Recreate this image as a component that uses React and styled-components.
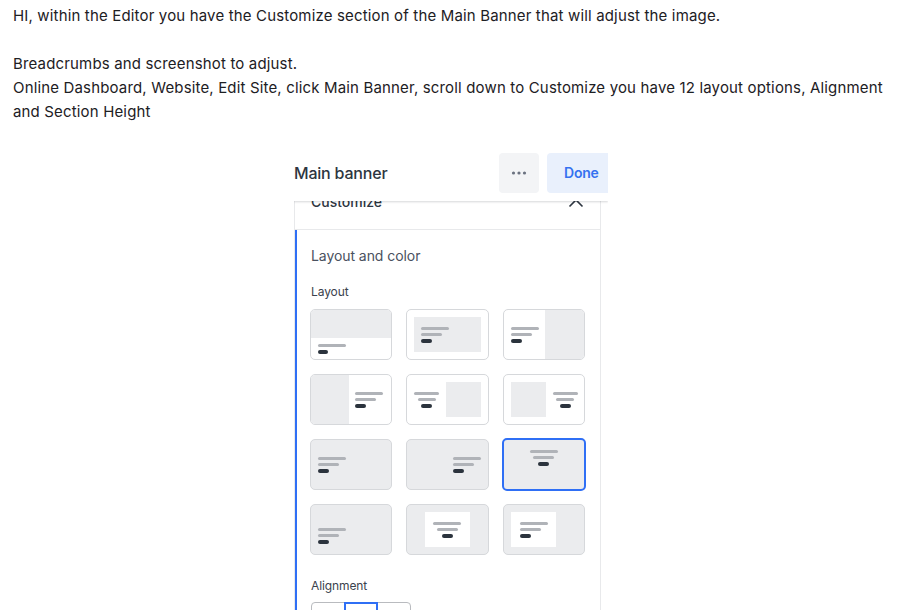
import React from 'react'
import styled, { createGlobalStyle } from 'styled-components'

const GlobalStyle = createGlobalStyle`
  html, body {
    margin: 0;
    height: 100%;
    overflow: hidden;
    background: #fff;
  }
`

const Page = styled.div`
  box-sizing: border-box;
  height: 610px;
  overflow: hidden;
  padding: 4px 23px 0 13px;
  font-family: Inter, "Liberation Sans", sans-serif;
  color: #1d2024;
`

const Message = styled.p`
  margin: 0;
  font-size: 15px;
  letter-spacing: 0.16px;
  line-height: 24px;
  white-space: pre-line;
`

const Shot = styled.div`
  width: 314px;
  height: 457px;
  margin: 29px auto 0;
  overflow: hidden;
`

const EditorHeader = styled.div`
  position: relative;
  z-index: 1;
  height: 48px;
  display: flex;
  align-items: flex-start;
  background: #fff;
  box-shadow: 0 1px 2px rgba(30, 35, 45, 0.18);
`

const Title = styled.div`
  flex: 1;
  font-size: 16px;
  font-weight: 500;
  letter-spacing: -0.2px;
  line-height: 40px;
  color: #2d3540;
`

const MoreButton = styled.div`
  width: 40px;
  height: 40px;
  margin-right: 8px;
  display: flex;
  align-items: center;
  justify-content: center;
  border-radius: 4px;
  background: #f3f4f6;
`

const DoneButton = styled.div`
  box-sizing: border-box;
  width: 61px;
  height: 40px;
  padding-left: 17px;
  border-radius: 4px 0 0 4px;
  background: #e9f0fc;
  color: #3572f0;
  font-size: 14px;
  font-weight: 600;
  letter-spacing: -0.2px;
  line-height: 40px;
`

const Panel = styled.div`
  box-sizing: border-box;
  width: 307px;
  margin-top: -28px;
  border: 1px solid #e8e9eb;
  border-top: 0;
`

const SectionHead = styled.div`
  height: 56px;
  padding: 0 16px;
  display: flex;
  align-items: center;
  justify-content: space-between;
  border-bottom: 1px solid #e8e9eb;
  font-size: 14px;
  font-weight: 500;
  color: #2d3540;
`

const Section = styled.div`
  border-left: 2px solid #2f6ff5;
  padding: 16px 0 0 13px;
`

const GroupTitle = styled.div`
  margin-left: 1px;
  font-size: 14px;
  letter-spacing: -0.07px;
  line-height: 20px;
  color: #4a5160;
`

const Label = styled.div`
  margin: ${p => p.$top}px 0 9px 1px;
  font-size: 12px;
  letter-spacing: -0.1px;
  line-height: 16px;
  color: #3b424d;
`

const LayoutGrid = styled.div`
  width: 275px;
  display: grid;
  grid-template-columns: repeat(3, 1fr);
  gap: 14px;
`

const Card = styled.div`
  box-sizing: border-box;
  height: 51px;
  display: flex;
  flex-direction: ${p => p.$column ? 'column' : 'row'};
  justify-content: ${p => p.$justify || 'flex-start'};
  align-items: ${p => p.$align || 'stretch'};
  padding: ${p => p.$pad || 0};
  border: 1px solid #d6d8db;
  border-radius: 5px;
  overflow: hidden;
  background: ${p => p.$filled ? '#ebecee' : '#fff'};

  ${p => p.$selected && `
    border: 2px solid #2f6ff5;
    margin: -1px;
    height: 53px;
  `}
`

const Media = styled.div`
  flex: ${p => p.$size ? `0 0 ${p.$size}px` : 1};
  display: flex;
  flex-direction: column;
  justify-content: center;
  align-items: ${p => p.$align || 'flex-start'};
  padding: ${p => p.$pad || 0};
  background: ${p => p.$white ? '#fff' : '#ebecee'};
`

const Copy = styled.div`
  display: flex;
  flex-direction: column;
  align-items: ${p => p.$center ? 'center' : 'flex-start'};
  flex-shrink: 0;
  padding-left: ${p => p.$inset || 0}px;
  ${p => p.$slot && `
    flex: 1;
    justify-content: center;
  `}
`

const Bar = styled.span`
  width: ${p => p.$w}px;
  height: 3px;
  margin-bottom: 3px;
  border-radius: 2px;
  background: #b0b3b8;
`

const Button = styled.span`
  width: ${p => p.$w || 10}px;
  height: 4px;
  border-radius: 2px;
  background: #2b333d;
`

const Segments = styled.div`
  box-sizing: border-box;
  width: 100px;
  height: 34px;
  margin: -1px 0 0 1px;
  display: grid;
  grid-template-columns: 32px 34px 32px;
  border: 1px solid #b9bbbf;
  border-radius: 4px;
`

const Segment = styled.div`
  margin: ${p => p.$active ? '-1px 0' : 0};
  border: ${p => p.$active ? '2px solid #2f6ff5' : 0};
`

const TextLines = ({ center, narrow }) => (
  <Copy $center={center}>
    <Bar $w={narrow ? 25 : 28} />
    <Bar $w={narrow ? 18 : 21} />
    <Button $w={11} />
  </Copy>
)

const Dots = () => (
  <svg width="16" height="4" viewBox="0 0 16 4">
    <circle cx="2.5" cy="2" r="1.6" fill="#6b7280" />
    <circle cx="8" cy="2" r="1.6" fill="#6b7280" />
    <circle cx="13.5" cy="2" r="1.6" fill="#6b7280" />
  </svg>
)

const Chevron = styled(({ className }) => (
  <svg className={className} width="16" height="10" viewBox="0 0 16 10" fill="none">
    <path d="M1.5 8.5 8 2l6.5 6.5" stroke="#2d3540" strokeWidth="1.6" />
  </svg>
))`
  margin-top: 4px;
`

export default function App() {
  return (
    <Page>
      <GlobalStyle />
      <Message>
        {`HI, within the Editor you have the Customize section of the Main Banner that will adjust the image.

Breadcrumbs and screenshot to adjust.
Online Dashboard, Website, Edit Site, click Main Banner, scroll down to Customize you have 12 layout options, Alignment and Section Height`}
      </Message>
      <Shot>
        <EditorHeader>
          <Title>Main banner</Title>
          <MoreButton><Dots /></MoreButton>
          <DoneButton>Done</DoneButton>
        </EditorHeader>
        <Panel>
          <SectionHead>
            <span>Customize</span>
            <Chevron />
          </SectionHead>
          <Section>
            <GroupTitle>Layout and color</GroupTitle>
            <Label $top={18}>Layout</Label>
            <LayoutGrid>
              <Card $column>
                <Media $size={28} />
                <Copy $slot $inset={7}>
                  <Bar $w={28} />
                  <Button />
                </Copy>
              </Card>
              <Card $pad="7px">
                <Media $pad="0 7px"><TextLines /></Media>
              </Card>
              <Card>
                <Copy $slot $inset={7}><TextLines /></Copy>
                <Media $size={39} />
              </Card>

              <Card>
                <Media $size={38} />
                <Copy $slot $inset={6}><TextLines /></Copy>
              </Card>
              <Card $pad="7px" $justify="space-between">
                <Copy $slot><TextLines center narrow /></Copy>
                <Media $size={35} />
              </Card>
              <Card $pad="7px" $justify="space-between">
                <Media $size={35} />
                <Copy $slot $inset={7}><TextLines center narrow /></Copy>
              </Card>

              <Card $filled $pad="0 7px" $align="center"><TextLines /></Card>
              <Card $filled $pad="0 7px" $align="center" $justify="flex-end"><TextLines /></Card>
              <Card $filled $selected $pad="10px 0 0" $justify="center" $align="flex-start"><TextLines center /></Card>

              <Card $filled $pad="0 7px 10px" $align="flex-end"><TextLines /></Card>
              <Card $filled $pad="7px 18px">
                <Media $white $align="center"><TextLines center /></Media>
              </Card>
              <Card $filled $pad="7px 28px 7px 7px">
                <Media $white $pad="0 0 0 9px"><TextLines /></Media>
              </Card>
            </LayoutGrid>
            <Label $top={23}>Alignment</Label>
            <Segments>
              <Segment />
              <Segment $active />
              <Segment />
            </Segments>
          </Section>
        </Panel>
      </Shot>
    </Page>
  )
}
